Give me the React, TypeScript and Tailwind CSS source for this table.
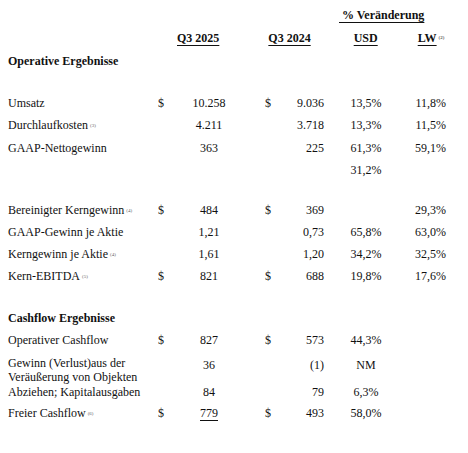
import React from "react";

type RowProps = {
  label: React.ReactNode;
  sup?: string;
  d1?: boolean;
  v1?: React.ReactNode;
  d2?: boolean;
  v2?: string;
  usd?: string;
  lw?: string;
  h?: string;
};

function Sup({ t }: { t: string }) {
  return (
    <span className="ml-[2px] inline-block align-middle text-[5px] leading-none text-[#666] -translate-y-[1px]">
      {t}
    </span>
  );
}

function Row({ label, sup, d1, v1, d2, v2, usd, lw, h = "h-[22px]" }: RowProps) {
  return (
    <div className={`flex items-center ${h}`}>
      <div className="w-[150px] pl-2 whitespace-nowrap">
        {label}
        {sup && <Sup t={sup} />}
      </div>
      <div className="w-[40px] pl-2">{d1 ? "$" : ""}</div>
      <div className="w-[38px] text-center">{v1}</div>
      <div className="w-[45px] text-right pr-[2px]">{d2 ? "$" : ""}</div>
      <div className="w-[51px] text-right">{v2}</div>
      <div className="w-[84px] text-center">{usd}</div>
      <div className="w-[38px] text-right">{lw}</div>
    </div>
  );
}

export default function App() {
  return (
    <div className="w-[468px] h-[453px] bg-white font-['Liberation_Serif','Times_New_Roman',serif] text-[12px] leading-[14px] text-[#111] pt-[4px]">
      {/* % Veränderung */}
      <div className="flex items-center h-[22px] pl-[339px] font-bold">
        <span className="underline decoration-1 underline-offset-[3px] whitespace-pre">{" % Veränderung"}</span>
      </div>
      {/* header */}
      <div className="flex items-center h-[24px] font-bold whitespace-nowrap">
        <span className="ml-[177px] underline decoration-1 underline-offset-[3px]">Q3 2025</span>
        <span className="ml-[49px] underline decoration-1 underline-offset-[3px]">Q3 2024</span>
        <span className="ml-[43px] underline decoration-1 underline-offset-[3px]">USD</span>
        <span className="ml-[40px] underline decoration-1 underline-offset-[3px]">LW</span>
        <Sup t="(2)" />
      </div>
      <div className="flex items-center h-[22px] pl-2 font-bold">Operative Ergebnisse</div>
      <div className="h-[20px]" />
      <Row label="Umsatz" d1 v1="10.258" d2 v2="9.036" usd="13,5%" lw="11,8%" />
      <Row label="Durchlaufkosten" sup="(3)" v1="4.211" v2="3.718" usd="13,3%" lw="11,5%" />
      <Row label="GAAP-Nettogewinn" v1="363" v2="225" usd="61,3%" lw="59,1%" h="h-[23px]" />
      <Row label="" usd="31,2%" />
      <div className="h-[18px]" />
      <Row label="Bereinigter Kerngewinn" sup="(4)" d1 v1="484" d2 v2="369" lw="29,3%" />
      <Row label="GAAP-Gewinn je Aktie" v1="1,21" v2="0,73" usd="65,8%" lw="63,0%" />
      <Row label="Kerngewinn je Aktie" sup="(4)" v1="1,61" v2="1,20" usd="34,2%" lw="32,5%" />
      <Row label="Kern-EBITDA" sup="(5)" d1 v1="821" d2 v2="688" usd="19,8%" lw="17,6%" />
      <div className="h-[20px]" />
      <div className="flex items-center h-[22px] pl-2 font-bold">Cashflow Ergebnisse</div>
      <Row label="Operativer Cashflow" d1 v1="827" d2 v2="573" usd="44,3%" />
      {/* two-line row */}
      <div className="flex items-start pt-[5px]">
        <div className="w-[150px] pl-2 leading-[14px]">
          <div>Gewinn (Verlust)aus der</div>
          <div>Veräußerung von Objekten</div>
        </div>
        <div className="w-[40px]" />
        <div className="w-[38px] text-center pt-[2px]">36</div>
        <div className="w-[45px]" />
        <div className="w-[51px] text-right pt-[2px]">(1)</div>
        <div className="w-[84px] text-center pt-[2px]">NM</div>
      </div>
      <Row label="Abziehen; Kapitalausgaben" v1="84" v2="79" usd="6,3%" h="h-[15px]" />
      <div className="h-[3px]" />
      <Row
        label="Freier Cashflow"
        sup="(6)"
        d1
        v1={<span className="underline decoration-1 underline-offset-[3px]">779</span>}
        d2
        v2="493"
        usd="58,0%"
      />
    </div>
  );
}
